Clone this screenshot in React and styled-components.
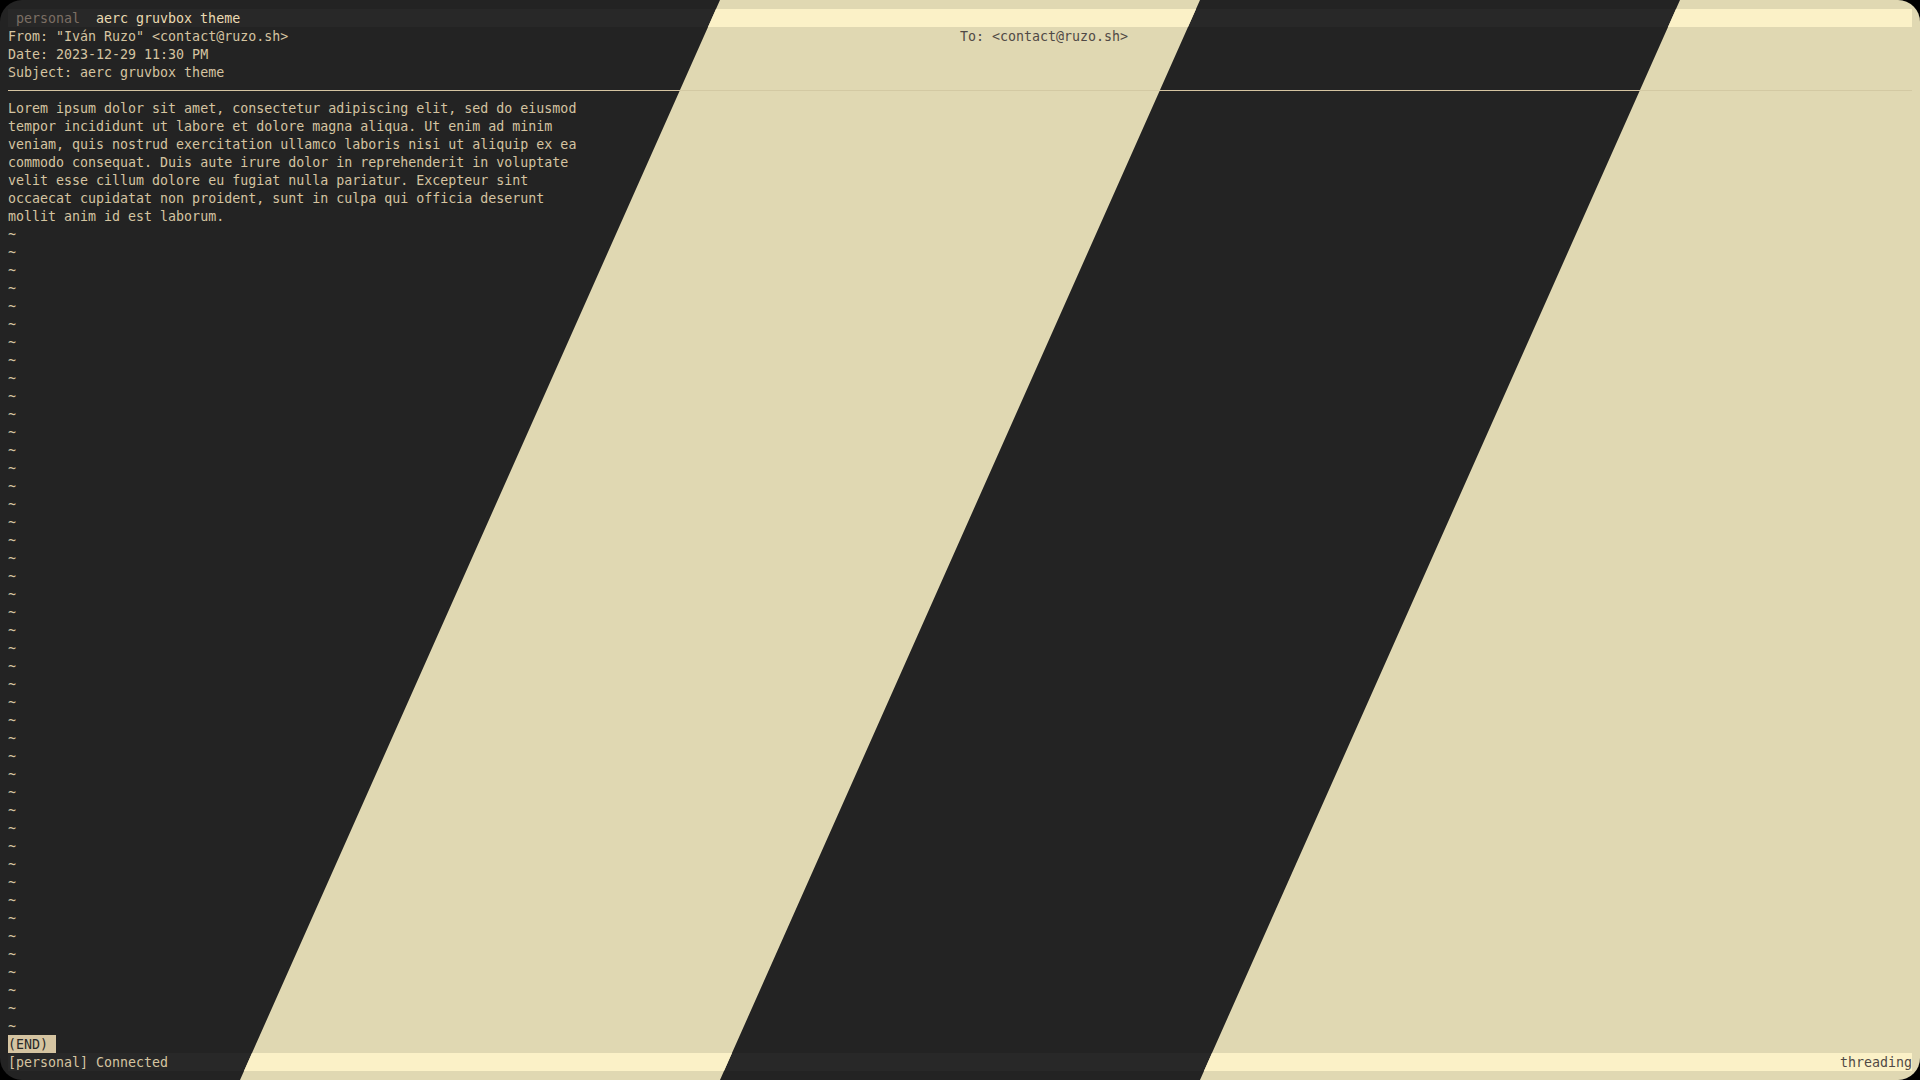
import React from 'react';
import styled, { createGlobalStyle, ThemeProvider, css } from 'styled-components';

const GlobalStyle = createGlobalStyle`
  html, body {
    margin: 0;
    padding: 0;
    background: #000;
    overflow: hidden;
  }
`;

const darkTheme = {
  bg: '#232323',
  bar: '#282828',
  fg: '#d5c4a1',
  bright: '#ebdbb2',
  dim: '#7c6f64',
  rule: '#d5c4a1',
  endBg: '#d5c4a1',
  endFg: '#282828',
};

const lightTheme = {
  bg: '#e0d8b2',
  bar: '#fbf1c7',
  fg: '#504945',
  bright: '#3c3836',
  dim: '#928374',
  rule: '#d3c9a3',
  endBg: '#504945',
  endFg: '#fbf1c7',
};

// one terminal cell row; text sits a pixel lower than the font's default
const cellRow = css`
  box-sizing: border-box;
  height: 18px;
  padding-top: 1px;
  flex-shrink: 0;
`;

const Screen = styled.div`
  position: relative;
  width: 1920px;
  height: 1080px;
  border-radius: 22px;
  overflow: hidden;
`;

// second copy of the window in the light palette, shown through diagonal bands
const LightLayer = styled.div`
  position: absolute;
  inset: 0;
  clip-path: polygon(
    37.5% 0, 62.5% 0, 37.5% 100%, 62.5% 100%,
    87.5% 0, 100% 0, 100% 100%, 12.5% 100%
  );
`;

const Terminal = styled.div`
  box-sizing: border-box;
  width: 100%;
  height: 100%;
  padding: 9px 8px;
  display: flex;
  flex-direction: column;
  background: ${(p) => p.theme.bg};
  color: ${(p) => p.theme.fg};
  font-family: 'DejaVu Sans Mono', 'Liberation Mono', monospace;
  font-size: 13.3px;
  line-height: 18px;
  white-space: pre;
`;

const TabBar = styled.div`
  ${cellRow}
  display: flex;
  background: ${(p) => p.theme.bar};
`;

const Tab = styled.span`
  padding: 0 8px;
  color: ${(p) => (p.$active ? p.theme.bright : p.theme.dim)};
`;

const HeaderRow = styled.div`
  ${cellRow}
  display: grid;
  grid-template-columns: 952px 1fr;
`;

const Rule = styled.div`
  height: 18px;
  flex-shrink: 0;
  display: flex;
  align-items: center;

  &::after {
    content: '';
    flex: 1;
    height: 1px;
    background: ${(p) => p.theme.rule};
  }
`;

const Line = styled.div`
  ${cellRow}
`;

const Filler = styled.div`
  flex: 1;
  overflow: hidden;
`;

const EndMark = styled.span`
  ${cellRow}
  align-self: flex-start;
  padding-right: 8px;
  background: ${(p) => p.theme.endBg};
  color: ${(p) => p.theme.endFg};
`;

const StatusBar = styled.div`
  ${cellRow}
  display: flex;
  justify-content: space-between;
  background: ${(p) => p.theme.bar};
`;

const body = [
  'Lorem ipsum dolor sit amet, consectetur adipiscing elit, sed do eiusmod',
  'tempor incididunt ut labore et dolore magna aliqua. Ut enim ad minim',
  'veniam, quis nostrud exercitation ullamco laboris nisi ut aliquip ex ea',
  'commodo consequat. Duis aute irure dolor in reprehenderit in voluptate',
  'velit esse cillum dolore eu fugiat nulla pariatur. Excepteur sint',
  'occaecat cupidatat non proident, sunt in culpa qui officia deserunt',
  'mollit anim id est laborum.',
];

const tildes = Array.from({ length: 45 }, (_, i) => i);

const MessageView = () => (
  <Terminal>
    <TabBar>
      <Tab>personal</Tab>
      <Tab $active>aerc gruvbox theme</Tab>
    </TabBar>
    <HeaderRow>
      <span>From: "Iván Ruzo" &lt;contact@ruzo.sh&gt;</span>
      <span>To: &lt;contact@ruzo.sh&gt;</span>
    </HeaderRow>
    <HeaderRow>
      <span>Date: 2023-12-29 11:30 PM</span>
    </HeaderRow>
    <HeaderRow>
      <span>Subject: aerc gruvbox theme</span>
    </HeaderRow>
    <Rule />
    {body.map((text) => (
      <Line key={text}>{text}</Line>
    ))}
    <Filler>
      {tildes.map((i) => (
        <Line key={i}>~</Line>
      ))}
    </Filler>
    <EndMark>(END)</EndMark>
    <StatusBar>
      <span>[personal] Connected</span>
      <span>threading</span>
    </StatusBar>
  </Terminal>
);

const App = () => (
  <>
    <GlobalStyle />
    <Screen>
      <ThemeProvider theme={darkTheme}>
        <MessageView />
      </ThemeProvider>
      <LightLayer>
        <ThemeProvider theme={lightTheme}>
          <MessageView />
        </ThemeProvider>
      </LightLayer>
    </Screen>
  </>
);

export default App;
